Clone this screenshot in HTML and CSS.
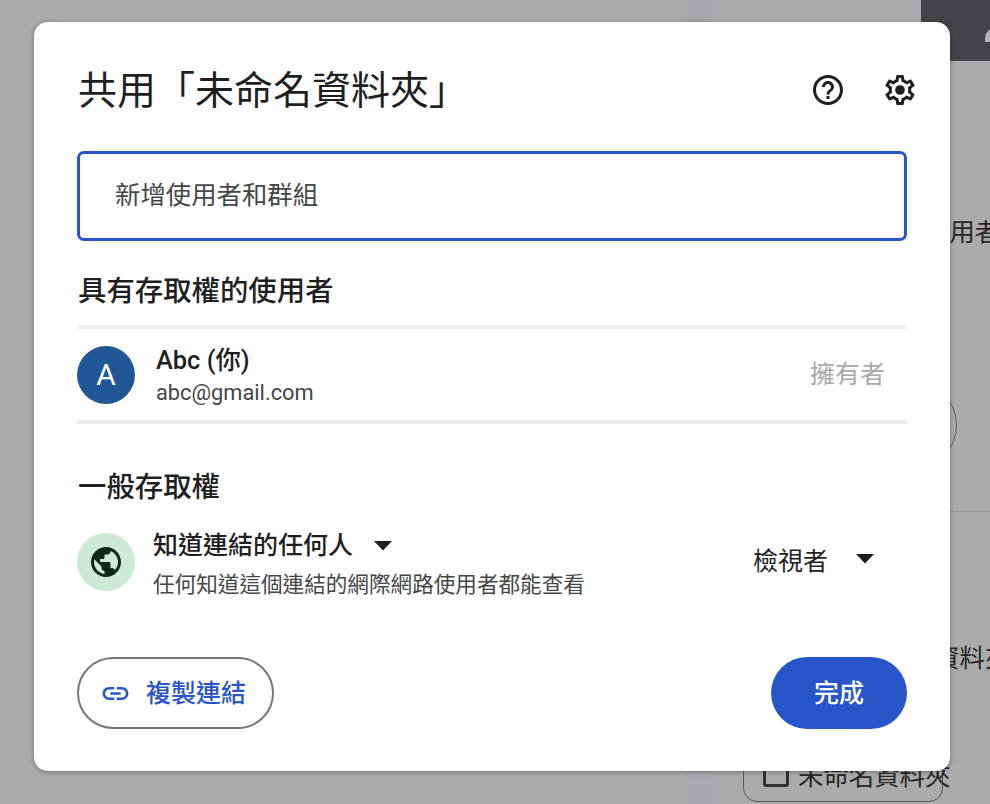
FILE: index.html
```html
<!DOCTYPE html>
<html lang="zh-Hant">
<head>
<meta charset="utf-8">
<title>共用</title>
<link rel="stylesheet" href="styles.css">
</head>
<body>
<div class="page">
  <div class="rail"></div>
  <div class="middle"></div>
  <div class="stripe"></div>
  <div class="side">
    <div class="bg-top"><div class="bg-avatar"></div></div>
    <div class="bg-title">使用者</div>
    <div class="bg-pill"></div>
    <div class="bg-rule"></div>
    <div class="bg-label">未命名資料夾</div>
    <div class="bg-button">
      <span class="bg-check"></span>
      <span>未命名資料夾</span>
    </div>
  </div>
</div>

<div class="dialog">
  <header class="head">
    <h1 class="title">共用「未命名資料夾」</h1>
    <div class="head-icons">
      <svg class="icon36" viewBox="0 0 24 24"><path d="M11 18h2v-2h-2v2zm1-16C6.48 2 2 6.48 2 12s4.48 10 10 10 10-4.48 10-10S17.52 2 12 2zm0 18c-4.41 0-8-3.59-8-8s3.59-8 8-8 8 3.59 8 8-3.59 8-8 8zm0-14c-2.21 0-4 1.79-4 4h2c0-1.1.9-2 2-2s2 .9 2 2c0 2-3 1.75-3 5h2c0-2.25 3-2.5 3-5 0-2.21-1.79-4-4-4z"/></svg>
      <svg class="icon36" viewBox="0 0 24 24"><path d="M19.43 12.98c.04-.32.07-.64.07-.98 0-.34-.03-.66-.07-.98l2.11-1.65c.19-.15.24-.42.12-.64l-2-3.46c-.09-.16-.26-.25-.44-.25-.06 0-.12.01-.17.03l-2.49 1c-.52-.4-1.08-.73-1.69-.98l-.38-2.65C14.46 2.18 14.25 2 14 2h-4c-.25 0-.46.18-.49.42l-.38 2.65c-.61.25-1.17.59-1.69.98l-2.49-1c-.06-.02-.12-.03-.18-.03-.17 0-.34.09-.43.25l-2 3.46c-.13.22-.07.49.12.64l2.11 1.65c-.04.32-.07.65-.07.98 0 .33.03.66.07.98l-2.11 1.65c-.19.15-.24.42-.12.64l2 3.46c.09.16.26.25.44.25.06 0 .12-.01.17-.03l2.49-1c.52.4 1.08.73 1.69.98l.38 2.65c.03.24.24.42.49.42h4c.25 0 .46-.18.49-.42l.38-2.65c.61-.25 1.17-.59 1.69-.98l2.49 1c.06.02.12.03.18.03.17 0 .34-.09.43-.25l2-3.46c.12-.22.07-.49-.12-.64l-2.11-1.65zm-1.98-1.71c.04.31.05.52.05.73 0 .21-.02.43-.05.73l-.14 1.13.89.7 1.08.84-.7 1.21-1.27-.51-1.04-.42-.9.68c-.43.32-.84.56-1.25.73l-1.06.43-.16 1.13-.2 1.35h-1.4l-.19-1.35-.16-1.13-1.06-.43c-.43-.18-.83-.41-1.23-.71l-.91-.7-1.06.43-1.27.51-.7-1.21 1.08-.84.89-.7-.14-1.13c-.03-.31-.05-.54-.05-.74s.02-.43.05-.73l.14-1.13-.89-.7-1.08-.84.7-1.21 1.27.51 1.04.42.9-.68c.43-.32.84-.56 1.25-.73l1.06-.43.16-1.13.2-1.35h1.39l.19 1.35.16 1.13 1.06.43c.43.18.83.41 1.23.71l.91.7 1.06-.43 1.27-.51.7 1.21-1.07.85-.89.7.14 1.13z"/><circle cx="12" cy="12" r="3.2"/></svg>
    </div>
  </header>

  <div class="field">新增使用者和群組</div>

  <h2 class="section first">具有存取權的使用者</h2>
  <div class="person">
    <div class="avatar">A</div>
    <div class="person-text">
      <div class="person-name">Abc (你)</div>
      <div class="person-mail">abc@gmail.com</div>
    </div>
    <div class="owner">擁有者</div>
  </div>

  <h2 class="section second">一般存取權</h2>
  <div class="access">
    <div class="globe">
      <svg class="icon36" viewBox="0 0 24 24"><path d="M12 2C6.48 2 2 6.48 2 12s4.48 10 10 10 10-4.48 10-10S17.52 2 12 2zm-1 17.93c-3.95-.49-7-3.85-7-7.93 0-.62.08-1.21.21-1.79L9 15v1c0 1.1.9 2 2 2v1.93zm6.9-2.54c-.26-.81-1-1.39-1.9-1.39h-1v-3c0-.55-.45-1-1-1H8v-2h2c.55 0 1-.45 1-1V7h2c1.1 0 2-.9 2-2v-.41c2.93 1.19 5 4.06 5 7.41 0 2.08-.8 3.97-2.1 5.39z"/></svg>
    </div>
    <div class="access-text">
      <div class="access-title">
        <span>知道連結的任何人</span>
        <svg class="caret" viewBox="0 0 18 10"><path d="M0 0h18l-9 9.5z"/></svg>
      </div>
      <div class="access-sub">任何知道這個連結的網際網路使用者都能查看</div>
    </div>
    <div class="role">
      <span>檢視者</span>
      <svg class="caret" viewBox="0 0 18 10"><path d="M0 0h18l-9 9.5z"/></svg>
    </div>
  </div>

  <footer class="foot">
    <button class="btn-copy">
      <svg class="icon-link" viewBox="0 0 24 24"><path d="M3.9 12c0-1.71 1.39-3.1 3.1-3.1h4V7H7c-2.76 0-5 2.24-5 5s2.24 5 5 5h4v-1.9H7c-1.71 0-3.1-1.39-3.1-3.1zM8 13h8v-2H8v2zm9-6h-4v1.9h4c1.71 0 3.1 1.39 3.1 3.1s-1.39 3.1-3.1 3.1h-4V17h4c2.76 0 5-2.24 5-5s-2.24-5-5-5z"/></svg>
      <span class="btn-label">複製連結</span>
    </button>
    <button class="btn-done"><span class="btn-label">完成</span></button>
  </footer>
</div>
</body>
</html>
```

FILE: styles.css
```css
* { box-sizing: border-box; }

html, body {
  margin: 0;
  padding: 0;
  height: 804px;
  overflow: hidden;
}

body {
  font-family: Roboto, "Noto Sans CJK TC", sans-serif;
  color: #1f1f1f;
  background: #ababab;
}

/* Dimmed page behind the dialog */
.page {
  display: flex;
  height: 804px;
  background: #ababab;
  overflow: hidden;
}

.rail { width: 57px; flex: none; background: #a9aaac; }
.middle { width: 628px; flex: none; }
.stripe { width: 27px; flex: none; background: #a7a9ac; }

.side {
  width: 278px;
  flex: none;
  overflow: hidden;
  color: #262626;
  font-size: 25.4px;
}

.bg-top {
  height: 61px;
  margin-left: 209px;
  background: #434447;
  overflow: hidden;
}

.bg-avatar {
  width: 10px;
  height: 14px;
  margin: 28px 0 0 64px;
  border-top-left-radius: 10px;
  background: #b4b4b4;
}

.bg-title {
  height: 30px;
  line-height: 30px;
  margin: 156px 0 0 212px;
  white-space: nowrap;
}

.bg-pill {
  width: 90px;
  height: 90px;
  margin: 133px 0 0 155px;
  border: 1.5px solid #5f5f5f;
  border-radius: 50%;
}

.bg-rule {
  height: 1px;
  margin-top: 41px;
  background: #969696;
}

.bg-label {
  height: 30px;
  line-height: 30px;
  margin: 131px 0 0 146px;
  white-space: nowrap;
}

.bg-button {
  display: flex;
  align-items: center;
  gap: 9px;
  width: 200px;
  height: 56px;
  margin: 73px 0 0 31px;
  padding-left: 19px;
  border: 1.5px solid #5a5a5a;
  border-radius: 14px;
  white-space: nowrap;
}

.bg-check {
  width: 26px;
  height: 26px;
  flex: none;
  border: 3px solid #333;
  border-radius: 3px;
}

/* Dialog */
.dialog {
  position: absolute;
  left: 34px;
  top: 22px;
  width: 916px;
  height: 749px;
  padding: 41px 43px 0;
  background: #fff;
  border-radius: 14px;
  box-shadow: 0 1px 5px rgba(0, 0, 0, .35);
}

.head {
  display: flex;
  align-items: center;
  justify-content: space-between;
  height: 56px;
}

.title {
  margin: 0 0 0 1px;
  font-size: 39px;
  font-weight: 400;
  line-height: 56px;
  white-space: nowrap;
}

.head-icons {
  display: flex;
  gap: 36px;
  margin: -2px -11px 0 0;
}

.icon36 {
  display: block;
  width: 36px;
  height: 36px;
  fill: currentColor;
}

.field {
  height: 90px;
  margin-top: 32px;
  padding-left: 35px;
  border: 3px solid #2856c9;
  border-radius: 7px;
  color: #444746;
  font-size: 25.4px;
  line-height: 82px;
}

.section {
  margin: 0 0 0 1px;
  font-size: 28.4px;
  font-weight: 500;
  line-height: 40px;
}

.section.first { margin-top: 31px; }
.section.second { margin-top: 44px; }

.person {
  display: flex;
  align-items: center;
  height: 99px;
  margin-top: 13px;
  border-top: 4px solid #efefef;
  border-bottom: 4px solid #efefef;
}

.avatar {
  display: flex;
  align-items: center;
  justify-content: center;
  width: 58px;
  height: 58px;
  flex: none;
  border-radius: 50%;
  background: #225797;
  color: #fff;
  font-size: 30px;
}

.person-text { margin: 3px 0 0 21px; flex: 1; }

.person-name {
  font-size: 25.4px;
  font-weight: 500;
  line-height: 32px;
}

.person-mail {
  margin-top: 2px;
  color: #444746;
  font-size: 21.8px;
  line-height: 30px;
}

.owner {
  margin: 0 22px 6px 0;
  color: #a9a9a9;
  font-size: 25px;
}

.access {
  display: flex;
  align-items: center;
  height: 76px;
  margin-top: 16px;
}

.globe {
  display: flex;
  align-items: center;
  justify-content: center;
  width: 58px;
  height: 58px;
  flex: none;
  border-radius: 50%;
  background: #cdead4;
  color: #0c2a14;
}

.access-text { margin: 5px 0 0 18px; flex: 1; }

.access-title {
  display: flex;
  align-items: center;
  gap: 21px;
  font-size: 25px;
  font-weight: 500;
  line-height: 36px;
}

.access-sub {
  margin-top: 5px;
  color: #444746;
  font-size: 21.6px;
  line-height: 32px;
  white-space: nowrap;
}

.caret {
  display: block;
  width: 18px;
  height: 10px;
  fill: #1f1f1f;
}

.role {
  display: flex;
  align-items: center;
  gap: 28px;
  margin: 0 33px 6px 0;
  font-size: 25px;
}

.foot {
  display: flex;
  justify-content: space-between;
  margin-top: 57px;
}

.btn-copy,
.btn-done {
  height: 72px;
  border-radius: 36px;
  font-family: inherit;
  font-size: 25px;
  font-weight: 500;
}

.btn-label {
  display: block;
  margin-bottom: 4px;
}

.btn-copy {
  display: flex;
  align-items: center;
  gap: 15px;
  width: 197px;
  padding: 0 0 0 21px;
  border: 2px solid #777;
  background: #fff;
  color: #2856c9;
}

.icon-link {
  display: block;
  width: 31px;
  height: 31px;
  flex: none;
  fill: currentColor;
}

.btn-done {
  width: 136px;
  padding: 0;
  border: 0;
  background: #2856c9;
  color: #fff;
}
```
